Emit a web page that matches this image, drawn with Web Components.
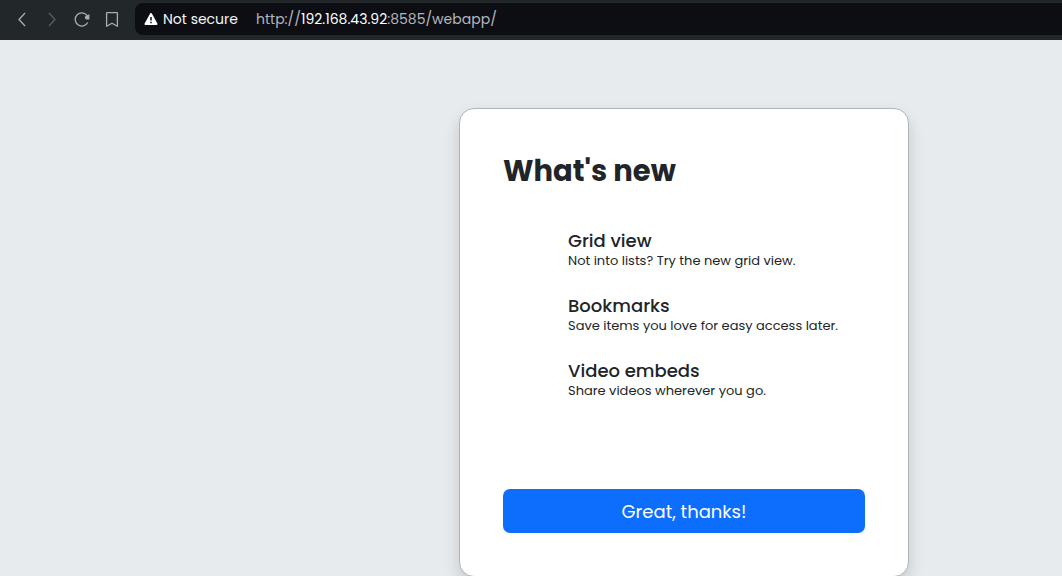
<!DOCTYPE html>
<html lang="en">
<head>
<meta charset="utf-8">
<title>What's new</title>
<style>
html, body { margin: 0; height: 100%; }
body { font-family: Poppins, Inter, "Open Sans", sans-serif; color: #212529; background: #e7ebee; }
</style>
</head>
<body>
<web-window>
  <browser-bar slot="bar"></browser-bar>
  <news-card>
    <span slot="title">What's new</span>
    <news-item><span slot="title">Grid view</span>Not into lists? Try the new grid view.</news-item>
    <news-item><span slot="title">Bookmarks</span>Save items you love for easy access later.</news-item>
    <news-item><span slot="title">Video embeds</span>Share videos wherever you go.</news-item>
    <span slot="action">Great, thanks!</span>
  </news-card>
</web-window>
<script>
function define(name, html) {
  const template = document.createElement('template');
  template.innerHTML = html;
  customElements.define(name, class extends HTMLElement {
    constructor() {
      super();
      this.attachShadow({ mode: 'open' }).append(template.content.cloneNode(true));
    }
  });
}

define('web-window', `
<style>
:host { display: flex; flex-direction: column; height: 100vh; }
main { flex: 1; min-height: 0; overflow: hidden; display: grid; grid-template-columns: 3fr minmax(0, 450px) 1fr; align-items: start; padding-top: 68px; box-sizing: border-box; }
::slotted(news-card) { grid-column: 2; }
</style>
<slot name="bar"></slot>
<main><slot></slot></main>`);

define('browser-bar', `
<style>
:host { display: flex; align-items: center; height: 40px; padding-left: 7px; box-sizing: border-box; background: #22272a; }
nav { display: flex; margin-right: 8px; }
button { display: grid; place-items: center; width: 30px; height: 32px; padding: 0; border: 0; background: none; color: #a2b0b8; }
button:disabled { color: #566067; }
svg { display: block; fill: none; stroke: currentColor; stroke-width: 1.3; }
form { flex: 1; min-width: 0; display: flex; align-items: center; height: 32px; margin: 0; margin-top: -2px; padding-left: 8px; box-sizing: border-box; border-radius: 8px 0 0 8px; background: #0d0e14; font-size: 14px; white-space: nowrap; }
.status { display: flex; align-items: center; width: auto; gap: 4px; font: inherit; color: #f5f6f8; }
.url { margin-left: 18px; color: #b3b7bc; }
.url b { font-weight: 400; color: #fff; }
</style>
<nav aria-label="Browser navigation">
  <button aria-label="Back"><svg width="16" height="16" viewBox="0 0 16 16"><path d="M11 1 5 7.500l6 6.500"/></svg></button>
  <button aria-label="Forward" disabled><svg width="16" height="16" viewBox="0 0 16 16"><path d="m5 1 6 6.500-6 6.500"/></svg></button>
  <button aria-label="Reload"><svg width="16" height="16" viewBox="0 0 16 16"><path d="M13.700 10.500A6.600 6.600 0 1 1 13.200 3.700"/><path d="M15.400 2.300v5.200h-3.200a2.200 2.200 0 0 1-.4-3.800z" fill="currentColor" stroke="none"/></svg></button>
  <button aria-label="Bookmark"><svg width="16" height="16" viewBox="0 0 16 16"><path d="M2.600 1.300q0-.8.8-.8h9.200q.8 0 .8.8v13L8 11.200l-5.400 3.100z" stroke-linejoin="round"/></svg></button>
</nav>
<form role="search">
  <button class="status" type="button"><svg width="16" height="16" viewBox="0 0 16 16"><path d="M8 3 2.500 13h11z" fill="#fff" stroke="#fff" stroke-width="2" stroke-linejoin="round"/><path d="M8 6v3.500m0 1.300v1.500" stroke="#0d0e14" stroke-width="1.500"/></svg>Not secure</button>
  <span class="url">http://<b>192.168.43.92</b>:8585/webapp/</span>
</form>`);

define('news-card', `
<style>
:host { display: block; box-sizing: border-box; padding: 44px 43px 43px; border: 1px solid #b0b4b7; border-radius: 15px; background: #fff; box-shadow: 0 8px 16px rgba(0, 0, 0, .15); }
h2 { margin: 0; font-size: 29px; line-height: 36px; font-weight: 700; }
ul { display: grid; gap: 25px; list-style: none; margin: 41px 0 89px; padding: 0 0 0 65px; }
button { display: block; width: 100%; height: 44px; padding: 0; border: 0; border-radius: 7px; background: #0d6efd; color: #fff; font: inherit; font-size: 18px; }
</style>
<h2><slot name="title"></slot></h2>
<ul role="list"><slot></slot></ul>
<button type="button"><slot name="action"></slot></button>`);

define('news-item', `
<style>
:host { display: block; font-size: 13px; line-height: 18px; }
h3 { margin: 0; font-size: 18px; line-height: 22px; font-weight: 500; }
</style>
<h3><slot name="title"></slot></h3>
<slot></slot>`);

for (const item of document.querySelectorAll('news-item')) item.setAttribute('role', 'listitem');
</script>
</body>
</html>
